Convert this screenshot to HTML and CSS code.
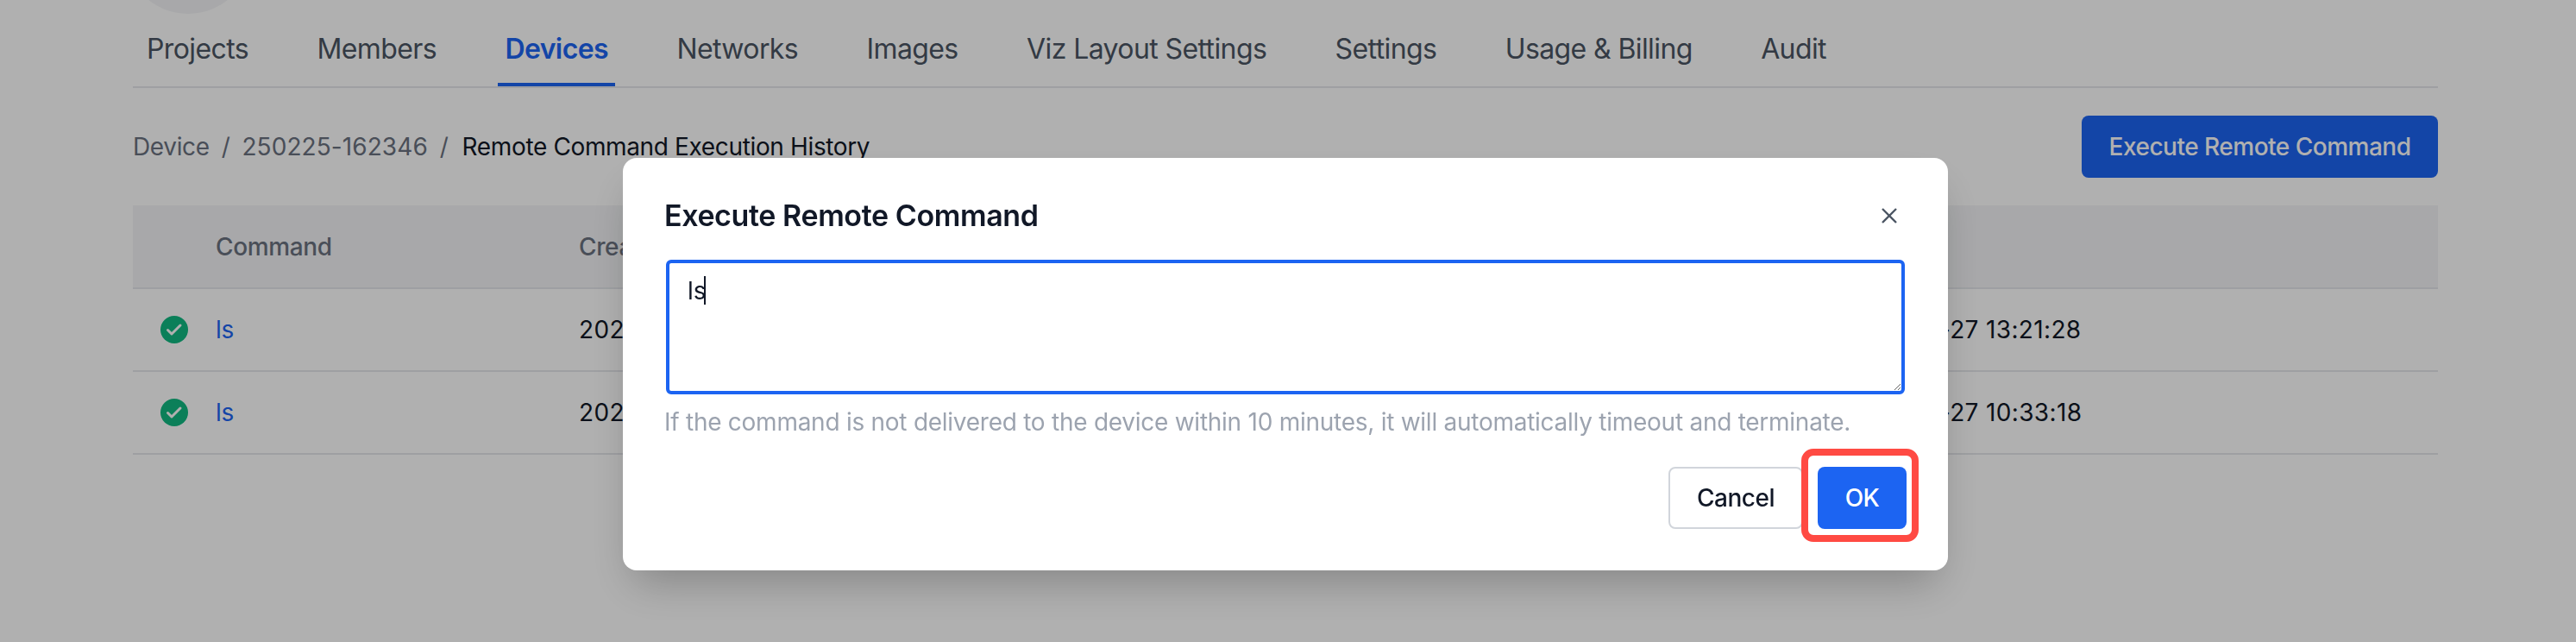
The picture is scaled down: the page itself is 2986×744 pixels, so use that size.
FILE: index.html
```html
<!DOCTYPE html>
<html lang="en">
  <head>
    <meta charset="UTF-8" />
    <title>Remote Command Execution History</title>
    <link rel="stylesheet" href="styles.css">
  </head>
  <body>
    <div class="page">
      <div class="avatar"></div>
      <nav class="tabs">
        <a class="tab">Projects</a>
        <a class="tab">Members</a>
        <a class="tab active">Devices</a>
        <a class="tab">Networks</a>
        <a class="tab">Images</a>
        <a class="tab">Viz Layout Settings</a>
        <a class="tab">Settings</a>
        <a class="tab">Usage &amp; Billing</a>
        <a class="tab">Audit</a>
      </nav>
      <div class="toolbar">
        <ol class="crumbs">
          <li>Device</li>
          <li class="sep">/</li>
          <li class="device-id">250225-162346</li>
          <li class="sep">/</li>
          <li class="current">Remote Command Execution History</li>
        </ol>
        <button class="btn btn-primary btn-execute">Execute Remote Command</button>
      </div>
      <div class="table">
        <div class="row head">
          <div></div>
          <div>Command</div>
          <div>Created At</div>
          <div>Updated</div>
        </div>
        <div class="row">
          <div class="status">
            <svg width="32" height="32" viewBox="0 0 32 32"><circle cx="16" cy="16" r="16" fill="#10b981"/><path d="M8.5 16.5l4.5 4.5 10-10" fill="none" stroke="#fff" stroke-width="3" stroke-linecap="round" stroke-linejoin="round"/></svg>
          </div>
          <div class="cmd">ls</div>
          <div class="date">2025-02-27 13:21:20</div>
          <div class="date">2025-02-27 13:21:28</div>
        </div>
        <div class="row">
          <div class="status">
            <svg width="32" height="32" viewBox="0 0 32 32"><circle cx="16" cy="16" r="16" fill="#10b981"/><path d="M8.5 16.5l4.5 4.5 10-10" fill="none" stroke="#fff" stroke-width="3" stroke-linecap="round" stroke-linejoin="round"/></svg>
          </div>
          <div class="cmd">ls</div>
          <div class="date">2025-02-27 10:33:10</div>
          <div class="date">2025-02-27 10:33:18</div>
        </div>
      </div>
    </div>

    <div class="overlay"></div>

    <div class="modal">
      <div class="modal-head">
        <h3>Execute Remote Command</h3>
        <svg class="close" width="20" height="20" viewBox="0 0 20 20"><path d="M2 2l16 16M18 2L2 18" stroke="#4b5563" stroke-width="2.4" fill="none"/></svg>
      </div>
      <div class="field">
        <textarea class="input">ls</textarea>
        <span class="caret"></span>
      </div>
      <p class="hint">If the command is not delivered to the device within 10 minutes, it will automatically timeout and terminate.</p>
      <div class="modal-foot">
        <button class="btn btn-cancel">Cancel</button>
        <button class="btn btn-primary btn-ok">OK</button>
      </div>
    </div>
  </body>
</html>
```

FILE: styles.css
```css
html,
body {
  margin: 0;
  height: 100%;
  overflow: hidden;
  background: #fff;
}
body {
  font-family: Inter, "Liberation Sans", sans-serif;
  font-size: 28px;
  letter-spacing: -0.36px;
  color: #111827;
}
.page {
  width: 2672px;
  margin-left: 154px;
}
.avatar {
  width: 146px;
  height: 146px;
  margin: -130px 0 0 -9px;
  border-radius: 50%;
  background: #f3f4f6;
}

/* tabs */
.tabs {
  display: flex;
  gap: 63.4px;
  margin-top: 21px;
  padding-left: 8px;
  border-bottom: 2px solid #e5e7eb;
  font-size: 32px;
  letter-spacing: -0.6px;
}
.tab {
  padding: 0 8px 19px;
  line-height: 40px;
  color: #4b5563;
  border-bottom: 4px solid transparent;
}
.tab.active {
  color: #1c64f2;
  font-weight: 600;
  border-bottom-color: #1c64f2;
}

/* breadcrumb + button */
.toolbar {
  display: flex;
  align-items: center;
  justify-content: space-between;
  margin-top: 32px;
}
.crumbs {
  display: flex;
  gap: 14px;
  margin: 0;
  padding: 0;
  list-style: none;
  color: #6b7280;
}
.crumbs .device-id {
  letter-spacing: 0.08px;
}
.crumbs .current {
  margin-left: 2px;
  color: #111827;
}
.btn {
  height: 72px;
  border-radius: 8px;
  font-family: inherit;
  font-size: 28px;
  font-weight: 500;
  letter-spacing: -0.5px;
}
.btn-primary {
  border: 0;
  color: #fff;
  background: #1c64f2;
}
.btn-execute {
  width: 413px;
}

/* table */
.table {
  margin-top: 32px;
}
.row {
  display: grid;
  grid-template-columns: 96px 421px 1458px 1fr;
  align-items: center;
  height: 94px;
  border-bottom: 2px solid #e5e7eb;
}
.row.head {
  height: 95px;
  background: #f3f4f6;
  color: #6b7280;
  font-weight: 500;
}
.status {
  display: flex;
  padding-left: 32px;
}
.cmd {
  color: #1c64f2;
}
.date {
  letter-spacing: 0.35px;
}

/* modal */
.overlay {
  position: fixed;
  inset: 0;
  background: rgba(0, 0, 0, 0.31);
}
.modal {
  position: fixed;
  left: 722px;
  top: 183px;
  width: 1536px;
  box-sizing: border-box;
  padding: 46px 48px 48px;
  border-radius: 16px;
  background: #fff;
  box-shadow: 0 25px 50px -12px rgba(0, 0, 0, 0.25);
}
.modal-head {
  display: flex;
  align-items: center;
  justify-content: space-between;
  padding-right: 10px;
}
.modal-head h3 {
  margin: 0;
  font-size: 34px;
  line-height: 42px;
  font-weight: 600;
  letter-spacing: -0.4px;
}
.field {
  position: relative;
  margin: 30px 2px 0;
  height: 156px;
}
.input {
  display: block;
  width: 100%;
  height: 156px;
  box-sizing: border-box;
  padding: 14px 21px;
  border: 4px solid #1c64f2;
  border-radius: 6px;
  outline: 0;
  font-family: inherit;
  font-size: 28px;
  line-height: 36px;
  color: #111827;
}
.caret {
  position: absolute;
  left: 44px;
  top: 19px;
  width: 2px;
  height: 33px;
  background: #111827;
}
.hint {
  margin: 14px 0 0;
  line-height: 36px;
  letter-spacing: -0.26px;
  color: #9ca3af;
}
.modal-foot {
  display: flex;
  justify-content: flex-end;
  gap: 17px;
  margin-top: 34px;
}
.btn-cancel {
  width: 156px;
  border: 2px solid #d1d5db;
  background: #fff;
  color: #111827;
}
.btn-ok {
  position: relative;
  width: 103px;
}
/* red annotation around the button */
.btn-ok::after {
  content: "";
  position: absolute;
  inset: -21px -14px -15px -19px;
  border: 8px solid #ff4a43;
  border-radius: 14px;
}
```
